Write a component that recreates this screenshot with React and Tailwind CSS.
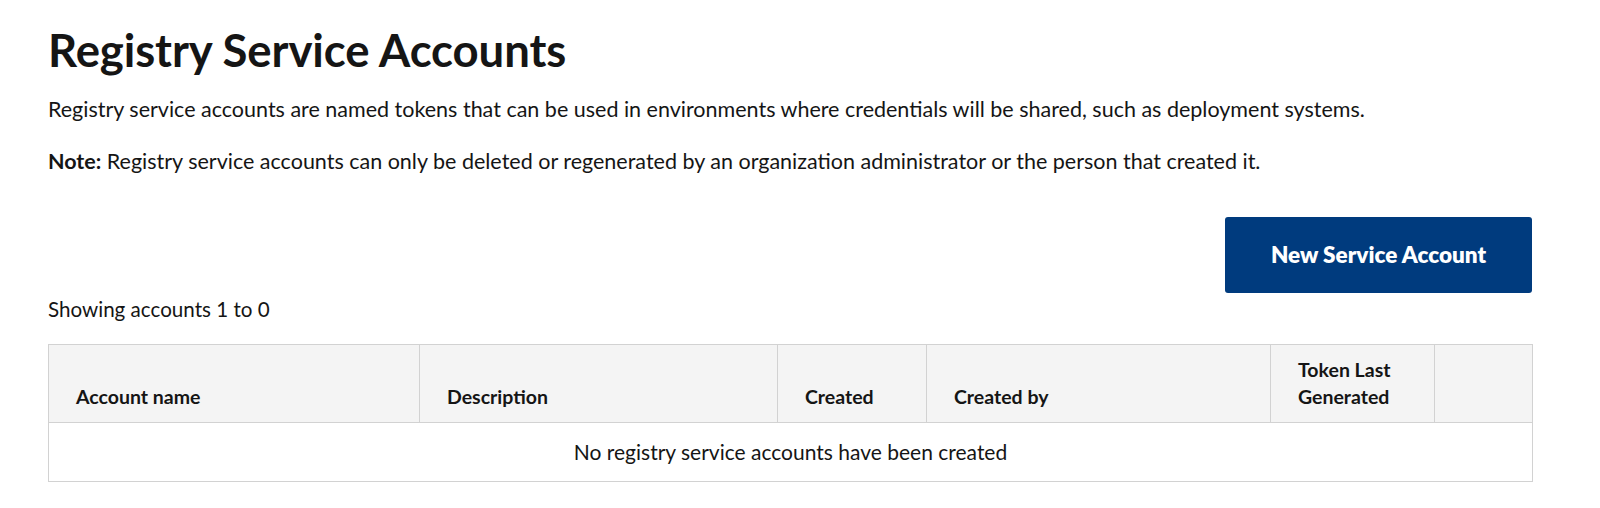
import React from "react";

const columns = [
  { label: "Account name", width: "w-[371px]" },
  { label: "Description", width: "w-[358px]" },
  { label: "Created", width: "w-[149px]" },
  { label: "Created by", width: "w-[344px]" },
  { label: ["Token Last", "Generated"], width: "w-[164px]" },
  { label: "", width: "w-[98px]" },
];

const App = () => {
  return (
    <div className="min-h-screen bg-white pl-[48px] pr-[68px] pt-[22px] text-[#151515] font-['Lato',sans-serif]">
      <h1 className="text-[45.5px] font-bold leading-[56px] tracking-[-0.1px]">Registry Service Accounts</h1>
      <p className="mt-[17px] text-[21.5px] leading-[28px]">
        Registry service accounts are named tokens that can be used in environments where credentials will be shared, such
        as deployment systems.
      </p>
      <p className="mt-[24px] text-[21.5px] leading-[28px]">
        <span className="font-bold">Note:</span> Registry service accounts can only be deleted or regenerated by an
        organization administrator or the person that created it.
      </p>

      {/* barra del boton */}
      <div className="mt-[42px] flex justify-end">
        <button className="h-[76px] w-[307px] rounded-[3px] bg-[#003b7e] text-[22.5px] font-extrabold text-white">
          New Service Account
        </button>
      </div>

      <div className="mt-[2px] text-[20.6px] leading-[28px]">Showing accounts 1 to 0</div>

      <table className="mt-[21px] w-full table-fixed border-collapse border border-[#d2d2d2]">
        <thead>
          <tr className="h-[78px] bg-[#f4f4f4]">
            {columns.map((col, i) => (
              <th
                key={i}
                className={`${col.width} border border-[#d2d2d2] px-[27px] pb-[12px] align-bottom text-left text-[19.5px] font-bold leading-[27px]`}
              >
                {Array.isArray(col.label) ? (
                  <>
                    {col.label[0]}
                    <br />
                    {col.label[1]}
                  </>
                ) : (
                  col.label
                )}
              </th>
            ))}
          </tr>
        </thead>
        <tbody>
          <tr className="h-[59px]">
            <td colSpan={6} className="border border-[#d2d2d2] text-center text-[21px]">
              No registry service accounts have been created
            </td>
          </tr>
        </tbody>
      </table>
    </div>
  );
};

export default App;
